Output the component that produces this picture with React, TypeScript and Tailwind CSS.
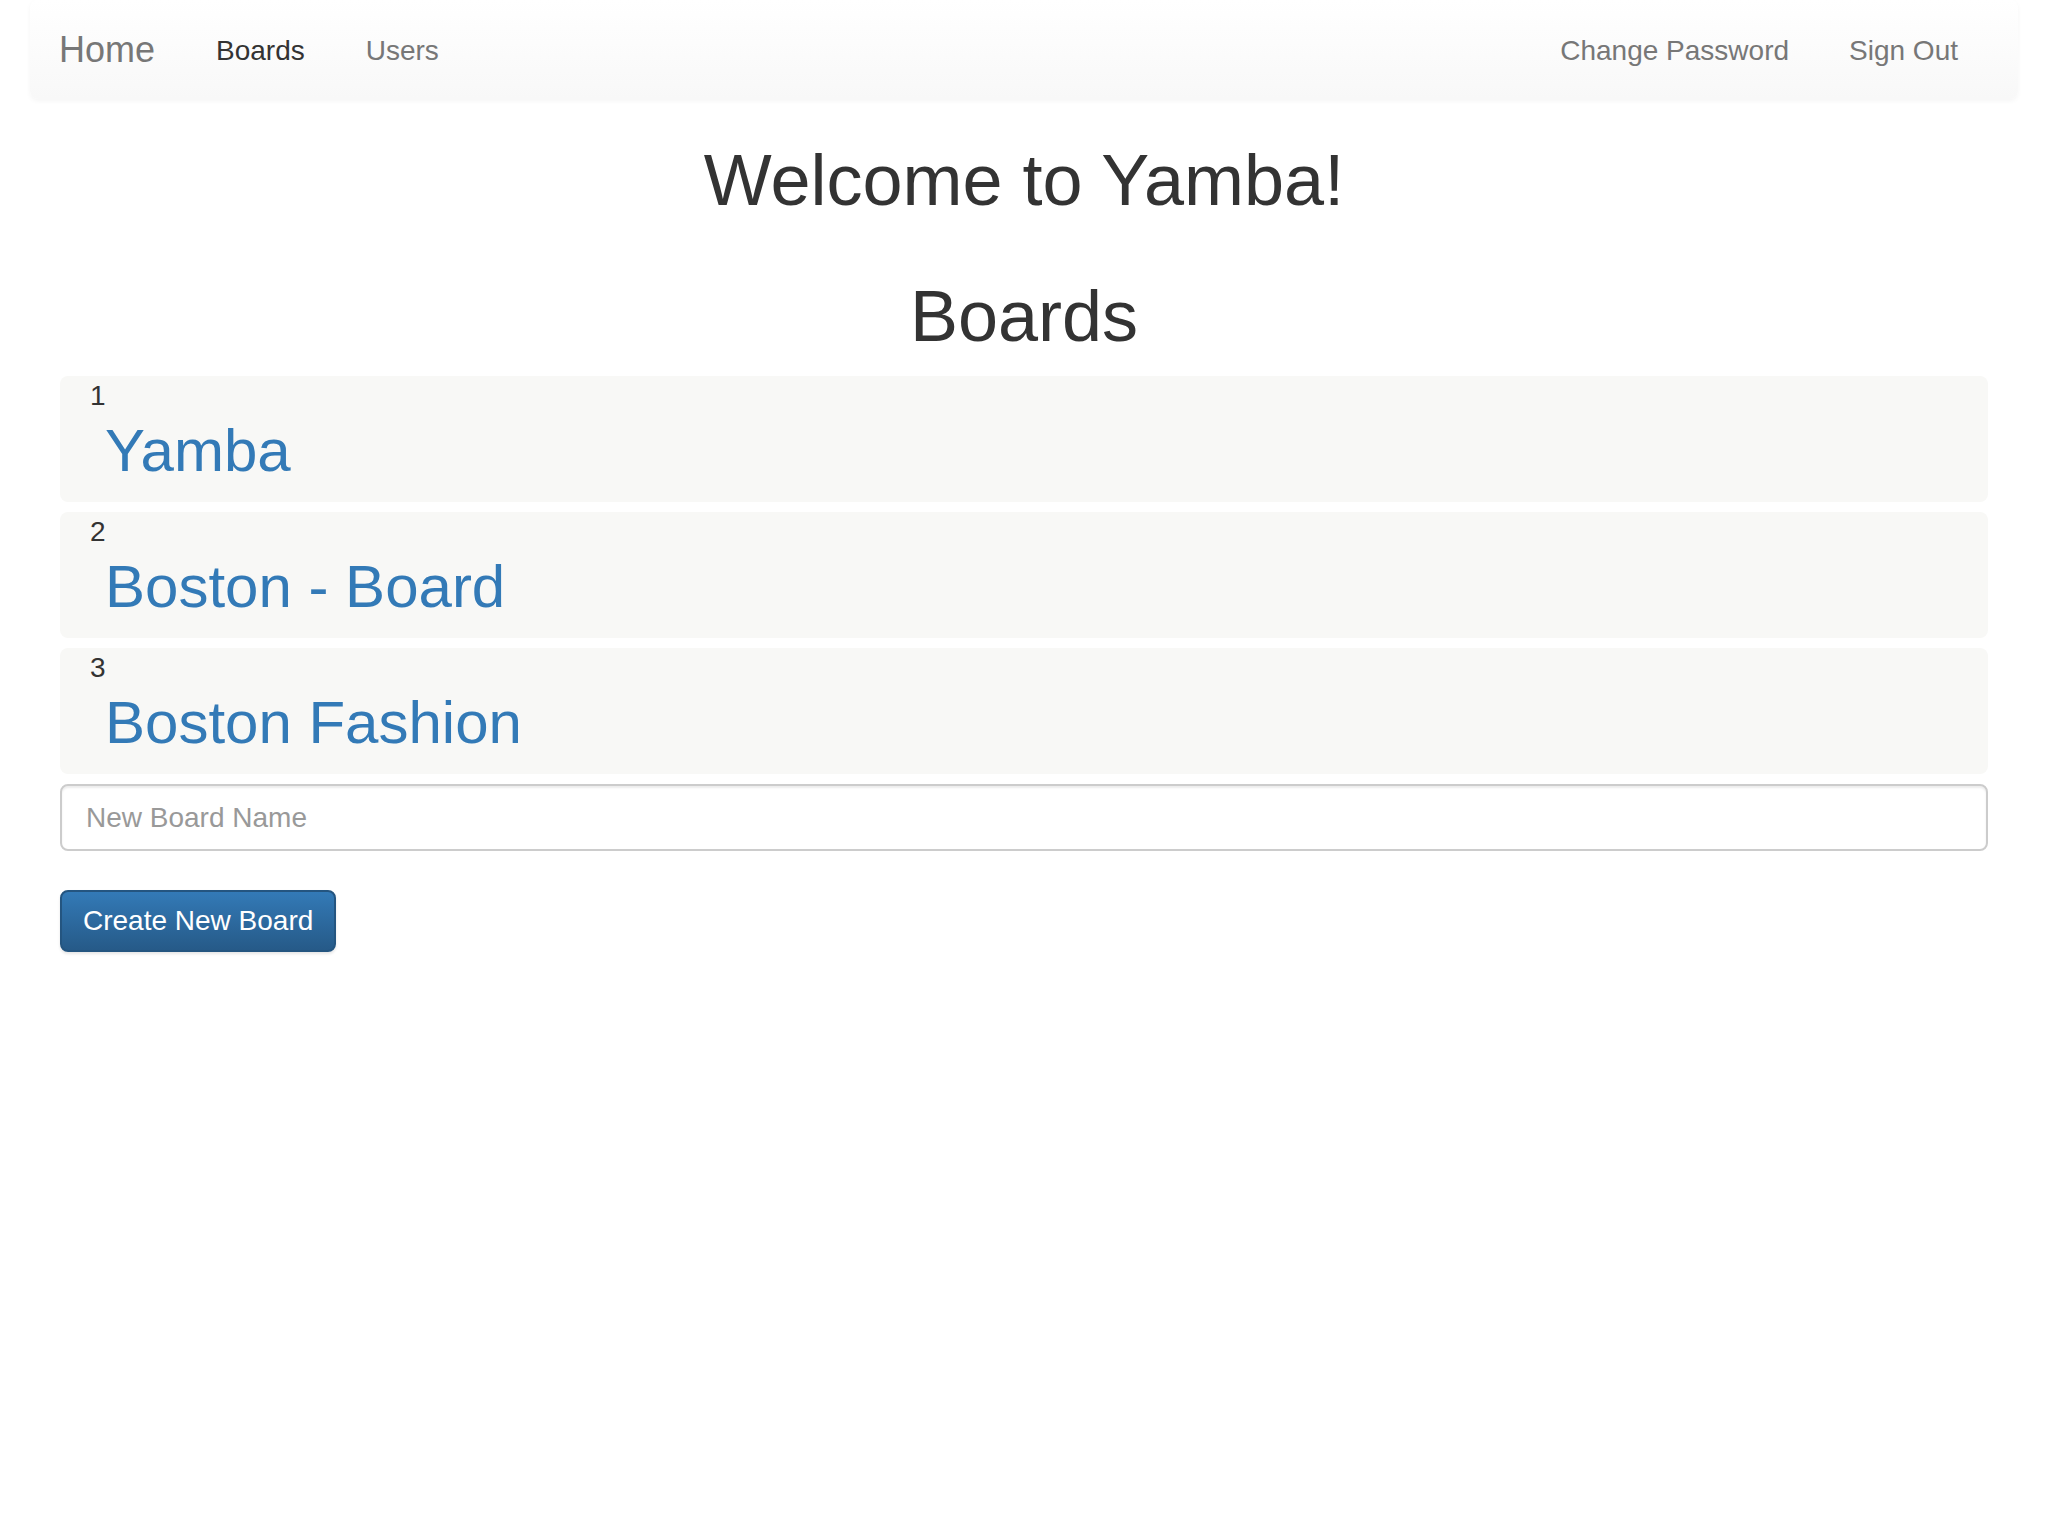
const boards = [
  { id: 1, name: 'Yamba' },
  { id: 2, name: 'Boston - Board' },
  { id: 3, name: 'Boston Fashion' },
];

const App = () => {
  return (
    <div className="min-h-screen bg-white font-['Liberation_Sans',Arial,sans-serif] text-[#333]">
      {/* navbar */}
      <nav className="mx-[30px] flex h-[99px] items-center justify-between rounded-[8px] bg-gradient-to-b from-white to-[#f8f8f8] shadow-[0_2px_5px_rgba(0,0,0,0.045)]">
        <div className="flex items-center pl-[29px]">
          <a className="text-[36px] leading-none text-[#777]">Home</a>
          <a className="ml-[61px] pt-[3px] text-[28px] leading-none text-[#333]">Boards</a>
          <a className="ml-[61px] pt-[3px] text-[28px] leading-none text-[#777]">Users</a>
        </div>
        <div className="flex items-center gap-[60px] pr-[60px] pt-[3px] text-[28px] leading-none text-[#777]">
          <a>Change Password</a>
          <a>Sign Out</a>
        </div>
      </nav>

      <div className="px-[60px]">
        <h1 className="mt-[42px] text-center text-[72px] leading-[78px]">Welcome to Yamba!</h1>
        <h1 className="mt-[58px] text-center text-[72px] leading-[78px]">Boards</h1>

        <div className="mt-[21px] flex flex-col gap-[10px]">
          {boards.map((b) => (
            <div key={b.id} className="rounded-[8px] bg-[#f8f8f6]">
              <div className="pl-[30px] text-[28px] leading-[39px] text-[#333]">{b.id}</div>
              <h2 className="mt-[3px] mb-[19px] pl-[45px] text-[60px] leading-[65px] text-[#337ab7]">{b.name}</h2>
            </div>
          ))}
        </div>

        <input
          type="text"
          placeholder="New Board Name"
          className="mt-[10px] block h-[67px] w-full rounded-[8px] border-2 border-[#ccc] px-[24px] text-[28px] text-[#555] shadow-[inset_0_2px_2px_rgba(0,0,0,0.075)] outline-none placeholder:text-[#999]"
        />

        <button className="mt-[39px] h-[62px] rounded-[8px] border-2 border-[#245580] bg-gradient-to-b from-[#337ab7] to-[#265a88] px-[21px] text-[28px] leading-none text-white shadow-[0_2px_3px_rgba(0,0,0,0.1)]">
          Create New Board
        </button>
      </div>
    </div>
  );
};

export default App;
